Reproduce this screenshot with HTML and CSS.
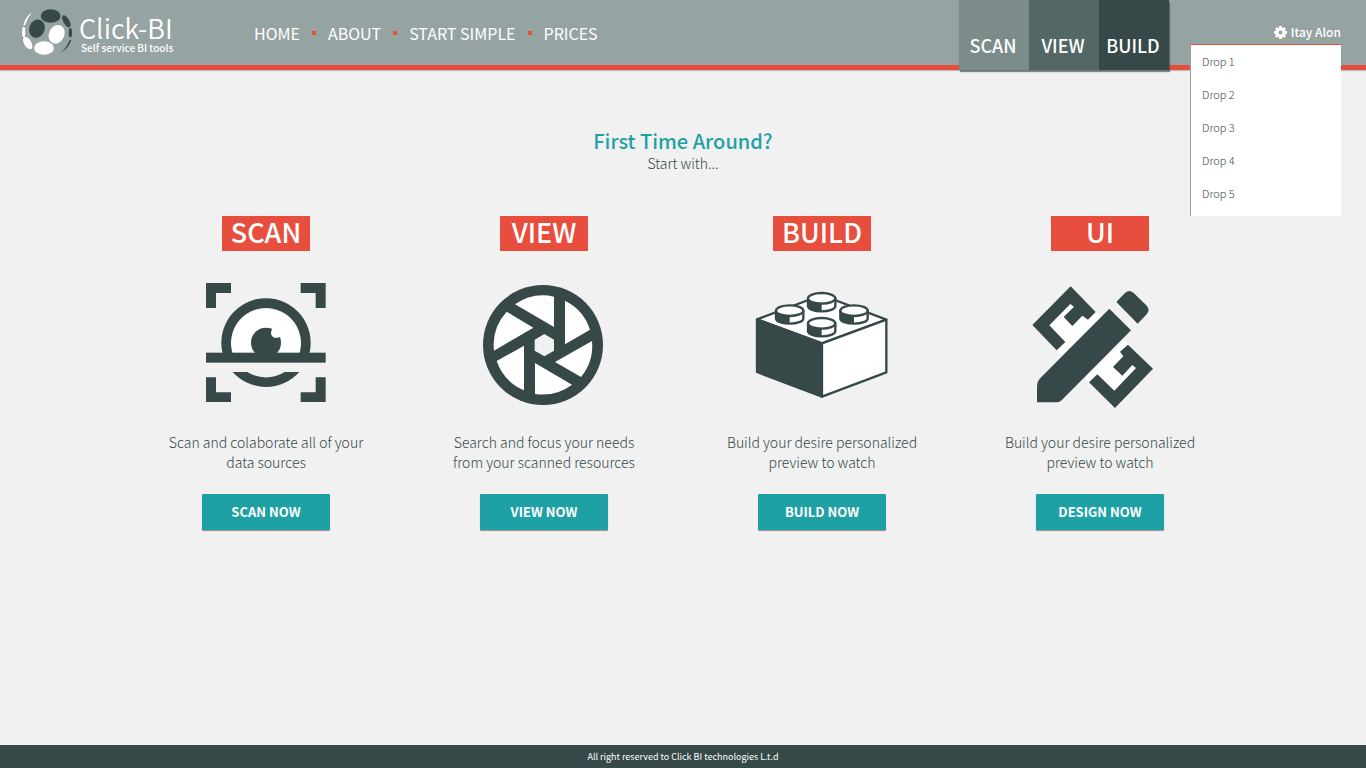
FILE: index.html
```html
<!DOCTYPE html>
<html lang="en">

<head>
    <meta charset="UTF-8">
    <meta name="viewport" content="width=device-width, initial-scale=1.0">
    <title>Click-BI</title>
    <link rel="stylesheet" href="styles.css">
</head>

<body>
    <header class="header">
        <a href="#" class="logo">
            <svg class="logo-icon" viewBox="60 20 165 150">
                <g fill="#364848">
                    <ellipse cx="152" cy="47" rx="30" ry="20"/>
                    <ellipse cx="111" cy="85" rx="23" ry="28" transform="rotate(20 111 85)"/>
                    <ellipse cx="199" cy="63" rx="9" ry="20" transform="rotate(-30 199 63)"/>
                    <ellipse cx="211" cy="97" rx="5" ry="14"/>
                    <path d="M214 118Q206 144 184 156Q201 141 208 120Z"/>
                </g>
                <g fill="#fff">
                    <ellipse cx="170" cy="102" rx="23" ry="29" transform="rotate(25 170 102)"/>
                    <ellipse cx="132" cy="143" rx="30" ry="20"/>
                    <ellipse cx="83" cy="128" rx="11" ry="21" transform="rotate(-30 83 128)"/>
                    <ellipse cx="71" cy="95" rx="5" ry="16"/>
                    <path d="M70 74Q76 50 96 36Q82 52 76 74Z"/>
                </g>
            </svg>
            <span class="logo-text">
                <span class="logo-name">Click-BI</span>
                <span class="logo-sub">Self service BI tools</span>
            </span>
        </a>

        <nav class="nav">
            <a href="#">HOME</a>
            <a href="#">ABOUT</a>
            <a href="#">START SIMPLE</a>
            <a href="#">PRICES</a>
        </nav>

        <nav class="tabs">
            <a href="#" class="tab tab-scan">SCAN</a>
            <a href="#" class="tab tab-view">VIEW</a>
            <a href="#" class="tab tab-build">BUILD</a>
        </nav>

        <div class="user">
            <button type="button" class="user-button">
                <svg class="gear" viewBox="-6 -6 12 12">
                    <circle r="3.3" fill="none" stroke="#fff" stroke-width="2.8"/>
                    <path d="M0-6V-4M0 4V6M-6 0H-4M4 0H6M-4.2-4.2L-3-3M3 3L4.2 4.2M-4.2 4.2L-3 3M3-3L4.2-4.2" stroke="#fff" stroke-width="2.6"/>
                </svg>
                Itay Alon
            </button>
            <ul class="dropdown">
                <li><a href="#">Drop 1</a></li>
                <li><a href="#">Drop 2</a></li>
                <li><a href="#">Drop 3</a></li>
                <li><a href="#">Drop 4</a></li>
                <li><a href="#">Drop 5</a></li>
            </ul>
        </div>
    </header>

    <main class="main">
        <h1>First Time Around?</h1>
        <p class="intro">Start with...</p>

        <div class="cards">
            <section class="card">
                <h2>SCAN</h2>
                <svg class="card-icon" viewBox="18 228 420 390">
                    <path d="M127 446A105 105 0 1 1 329 446Z" fill="#fff"/>
                    <g fill="#364848">
                        <path d="M48 234H123V264H78V309H48ZM332 234H407V309H377V264H332ZM48 517H78V562H123V591H48ZM377 517H407V591H332V562H377Z"/>
                        <path d="M98 446A134 134 0 1 1 358 446H328A105 105 0 1 0 128 446Z"/>
                        <path d="M128 501H172A105 105 0 0 0 284 501H328A134 134 0 0 1 128 501Z"/>
                        <circle cx="228" cy="413" r="45"/>
                        <rect x="48" y="443" width="359" height="30"/>
                    </g>
                    <path d="M247 372Q238 386 248 395Q257 402 271 395L280 372Z" fill="#fff"/>
                </svg>
                <p>Scan and colaborate all of your data sources</p>
                <button type="button">SCAN NOW</button>
            </section>

            <section class="card">
                <h2>VIEW</h2>
                <svg class="card-icon" viewBox="12 228 420 390">
                    <circle cx="219" cy="420" r="180" fill="#364848"/>
                    <g fill="#fff">
                        <path d="M135 298A148 148 0 0 1 252 275V366Z"/>
                        <path d="M285 287A148 148 0 0 1 360 374L285 418Z"/>
                        <path d="M366 408A148 148 0 0 1 333 516L255 471Z"/>
                        <path d="M306 539A148 148 0 0 1 195 567V474Z"/>
                        <path d="M162 556A148 148 0 0 1 80 468L162 422Z"/>
                        <path d="M72 437A148 148 0 0 1 110 320L190 368Z"/>
                    </g>
                    <path d="M223 387L252 404V437L223 454L194 437V404Z" fill="#f1f1f1"/>
                </svg>
                <p>Search and focus your needs from your scanned resources</p>
                <button type="button">VIEW NOW</button>
            </section>

            <section class="card card-wide">
                <h2>BUILD</h2>
                <svg class="card-icon" viewBox="21 228 420 390">
                    <defs>
                        <g id="stud">
                            <path d="M-41 0V24A41 15 0 0 0 41 24V0Z" fill="#fff"/>
                            <path d="M-41 0V24A41 15 0 0 0 0 39V0Z" fill="#364848" stroke="none"/>
                            <ellipse rx="41" ry="16" fill="#fff"/>
                        </g>
                    </defs>
                    <g stroke="#364848" stroke-width="7" stroke-linejoin="round">
                        <path d="M36 343L230 270L424 344L231 415Z" fill="#fff"/>
                        <path d="M36 343L231 415V575L36 501Z" fill="#364848"/>
                        <path d="M231 415L424 344V502L231 575Z" fill="#fff"/>
                        <use href="#stud" x="230" y="280"/>
                        <use href="#stud" x="134" y="317"/>
                        <use href="#stud" x="327" y="317"/>
                        <use href="#stud" x="230" y="355"/>
                    </g>
                </svg>
                <p>Build your desire personalized preview to watch</p>
                <button type="button">BUILD NOW</button>
            </section>

            <section class="card card-wide">
                <h2>UI</h2>
                <svg class="card-icon" viewBox="30 228 420 390">
                    <path d="M152 260L55 360L110 436L124 452L245 335L226 321Z" fill="#fff"/>
                    <path d="M314 404L327 420L385 491L285 595L207 532L193 520Z" fill="#fff"/>
                    <g fill="#364848">
                        <path d="M152 244L37 360L110 436L136 411L88 361L151 297L162 305L131 336L157 363L187 332L204 344L227 321Z"/>
                        <path d="M324 419L399 491L285 609L207 532L232 508L283 557L348 489L337 480L307 512L279 486L310 454L300 440Z"/>
                        <path d="M268 311L333 376L125 586Q119 592 111 592H51V545Q51 529 62 518Z"/>
                        <path d="M289 291L312 267Q326 250 341 264L379 301Q392 314 380 328L353 356Z"/>
                    </g>
                </svg>
                <p>Build your desire personalized preview to watch</p>
                <button type="button">DESIGN NOW</button>
            </section>
        </div>
    </main>

    <footer class="footer">All right reserved to Click BI technologies L.t.d</footer>
</body>

</html>
```
FILE: styles.css
```css
* {
    box-sizing: border-box;
}

body {
    margin: 0;
    min-height: 100vh;
    display: flex;
    flex-direction: column;
    font-family: "Noto Sans CJK SC", "Open Sans", sans-serif;
    background-color: #f1f1f1;
    color: #364848;
}

a {
    color: inherit;
    text-decoration: none;
}

button {
    border: none;
    font-family: inherit;
    color: #fff;
    cursor: pointer;
}

.header {
    display: flex;
    align-items: flex-start;
    height: 70px;
    padding: 0 25px 0 20px;
    background-color: #95a3a3;
    border-bottom: 5px solid #e84e3e;
    box-shadow: 0 1px 1px rgba(0, 0, 0, 0.2);
    color: #fff;
}

.logo {
    display: flex;
    gap: 4px;
    padding-top: 7px;
    width: 234px;
}

.logo-icon {
    width: 55px;
    height: 50px;
}

.logo-text {
    display: flex;
    flex-direction: column;
    padding-top: 7px;
}

.logo-name {
    font-size: 27px;
    font-weight: 350;
    line-height: 28px;
}

.logo-sub {
    padding-left: 2px;
    font-size: 10px;
    font-weight: 500;
    line-height: 11px;
}

.nav {
    display: flex;
    align-items: center;
    margin-right: auto;
    height: 66px;
    font-size: 16px;
    white-space: nowrap;
}

.nav a {
    display: flex;
    align-items: center;
}

.nav a + a::before {
    content: "";
    width: 4px;
    height: 4px;
    margin: 0 12px;
    background-color: #e84e3e;
}

.tabs {
    display: flex;
    box-shadow: 1px 2px 1px rgba(54, 72, 72, 0.6);
}

.tab {
    width: 70px;
    height: 70px;
    padding: 30px 2px 0 0;
    font-size: 18px;
    font-weight: 500;
    line-height: 31px;
    text-align: center;
}

.tab-scan {
    background-color: #7b8c8b;
}

.tab-view {
    background-color: #536766;
}

.tab-build {
    background-color: #364848;
}

.user {
    position: relative;
    width: 151px;
    margin-left: 21px;
    padding-top: 22px;
}

.user-button {
    display: flex;
    align-items: center;
    gap: 4px;
    margin-left: auto;
    padding: 0;
    background: none;
    font-size: 12px;
    font-weight: 500;
    line-height: 20px;
}

.gear {
    width: 13px;
    height: 13px;
}

.dropdown {
    position: absolute;
    top: 44px;
    left: 0;
    right: 0;
    margin: 0;
    padding: 0 0 6px;
    list-style: none;
    background-color: #fff;
    border-top: 1px solid #e84e3e;
    border-left: 1px solid #95a3a3;
    color: #364848;
}

.dropdown a {
    display: block;
    padding-left: 11px;
    font-size: 11px;
    font-weight: 300;
    line-height: 33px;
}

.main {
    flex: 1;
    padding: 60px 20px 40px;
    text-align: center;
}

h1 {
    margin: 0;
    font-size: 20px;
    font-weight: 500;
    line-height: 22px;
    color: #1ea1a5;
}

.intro {
    margin: 0 0 42px;
    font-size: 14px;
    font-weight: 300;
    line-height: 22px;
}

.cards {
    display: grid;
    grid-template-columns: repeat(4, 1fr);
    max-width: 1112px;
    margin: 0 auto;
}

.card {
    display: flex;
    flex-direction: column;
    align-items: center;
}

.card h2 {
    width: 88px;
    margin: 0 0 30px;
    padding-bottom: 4px;
    background-color: #e84e3e;
    color: #fff;
    font-size: 27px;
    font-weight: 500;
    line-height: 31px;
}

.card-wide h2 {
    width: 98px;
}

.card-icon {
    width: 140px;
    height: 130px;
}

.card p {
    width: 200px;
    margin: 21px 0 22px;
    font-size: 14px;
    font-weight: 300;
    line-height: 20px;
}

.card button {
    width: 128px;
    height: 36px;
    padding: 0 0 2px;
    background-color: #1ea1a5;
    border-radius: 1px;
    box-shadow: 0 1px 1px rgba(0, 0, 0, 0.4);
    font-size: 13px;
    font-weight: 700;
}

.footer {
    padding: 2px 0;
    background-color: #364848;
    color: #fff;
    font-size: 9px;
    line-height: 19px;
    text-align: center;
}
```
